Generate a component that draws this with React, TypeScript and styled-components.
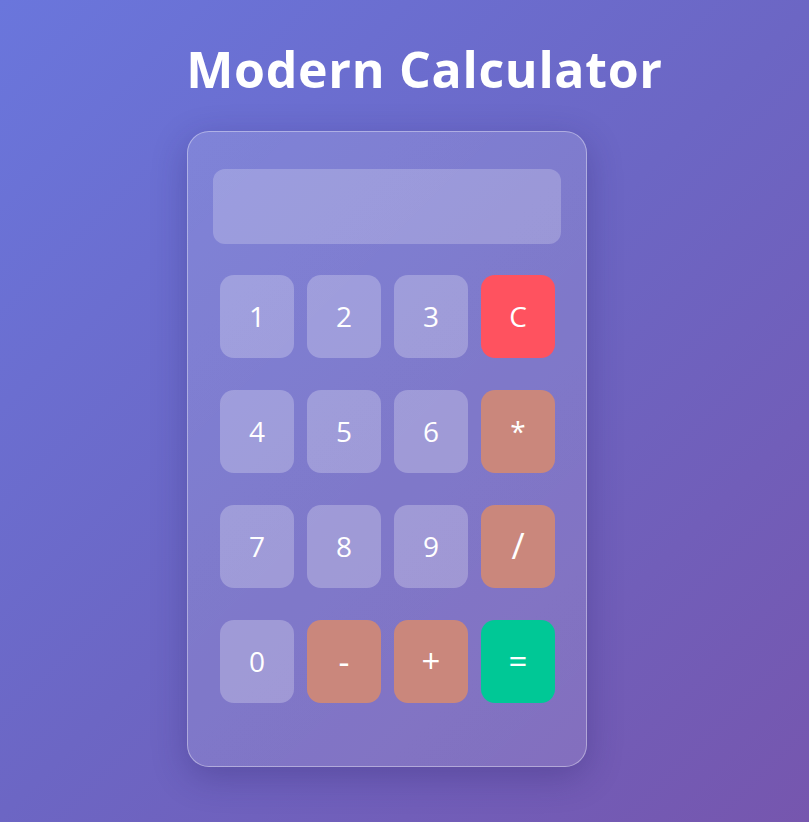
import React from "react";
import styled, { createGlobalStyle } from "styled-components";

const Global = createGlobalStyle`
  html, body { margin: 0; padding: 0; }
  body {
    min-height: 100vh;
    background: linear-gradient(135deg, #6a76dc 0%, #6c66c4 50%, #7656ae 100%);
    font-family: "Open Sans", "Noto Sans", sans-serif;
    overflow: hidden;
  }
`;

const Page = styled.div`
  display: flex;
  flex-direction: column;
  align-items: center;
  min-height: 822px;
  padding-top: 37px;
  box-sizing: border-box;
`;

const Title = styled.h1`
  margin: 0 0 0 40px;
  font-family: "Open Sans", sans-serif;
  font-weight: 700;
  font-size: 50px;
  line-height: 64px;
  color: #ffffff;
  letter-spacing: 0.7px;
`;

const Calc = styled.div`
  margin-top: 30px;
  margin-right: 35px;
  width: 400px;
  height: 636px;
  box-sizing: border-box;
  padding: 37px 25px 25px;
  border-radius: 22px;
  background: linear-gradient(135deg, rgba(255,255,255,0.14), rgba(255,255,255,0.12));
  border: 1px solid rgba(255, 255, 255, 0.38);
  box-shadow: 0 10px 35px rgba(40, 30, 100, 0.3);
  display: flex;
  flex-direction: column;
  gap: 31px;
`;

const Display = styled.div`
  height: 75px;
  border-radius: 12px;
  background: rgba(255, 255, 255, 0.22);
`;

const Keys = styled.div`
  display: grid;
  grid-template-columns: repeat(4, 74px);
  grid-auto-rows: 83px;
  column-gap: 13px;
  row-gap: 32px;
  padding: 0 7px;
`;

type Kind = "num" | "op" | "clear" | "eq";
const bg: Record<Kind, string> = {
  num: "rgba(255,255,255,0.25)",
  op: "#ca877c",
  clear: "#ff525f",
  eq: "#00c896",
};

const Key = styled.button<{ $kind: Kind; $size?: number }>`
  border: none;
  border-radius: 14px;
  background: ${(p) => bg[p.$kind]};
  color: #ffffff;
  font-family: "Open Sans", sans-serif;
  font-size: ${(p) => p.$size ?? 28}px;
  font-weight: 400;
  display: flex;
  align-items: center;
  justify-content: center;
  padding: 0 0 2px;
  cursor: pointer;
`;

const keys: { label: string; kind: Kind; size?: number }[] = [
  { label: "1", kind: "num" },
  { label: "2", kind: "num" },
  { label: "3", kind: "num" },
  { label: "C", kind: "clear" },
  { label: "4", kind: "num" },
  { label: "5", kind: "num" },
  { label: "6", kind: "num" },
  { label: "*", kind: "op" },
  { label: "7", kind: "num" },
  { label: "8", kind: "num" },
  { label: "9", kind: "num" },
  { label: "/", kind: "op", size: 36 },
  { label: "0", kind: "num" },
  { label: "-", kind: "op", size: 34 },
  { label: "+", kind: "op", size: 33 },
  { label: "=", kind: "eq", size: 33 },
];

export default function App() {
  return (
    <>
      <Global />
      <Page>
        <Title>Modern Calculator</Title>
        <Calc>
          <Display />
          <Keys>
            {keys.map((k) => (
              <Key key={k.label} $kind={k.kind} $size={k.size}>
                {k.label}
              </Key>
            ))}
          </Keys>
        </Calc>
      </Page>
    </>
  );
}
